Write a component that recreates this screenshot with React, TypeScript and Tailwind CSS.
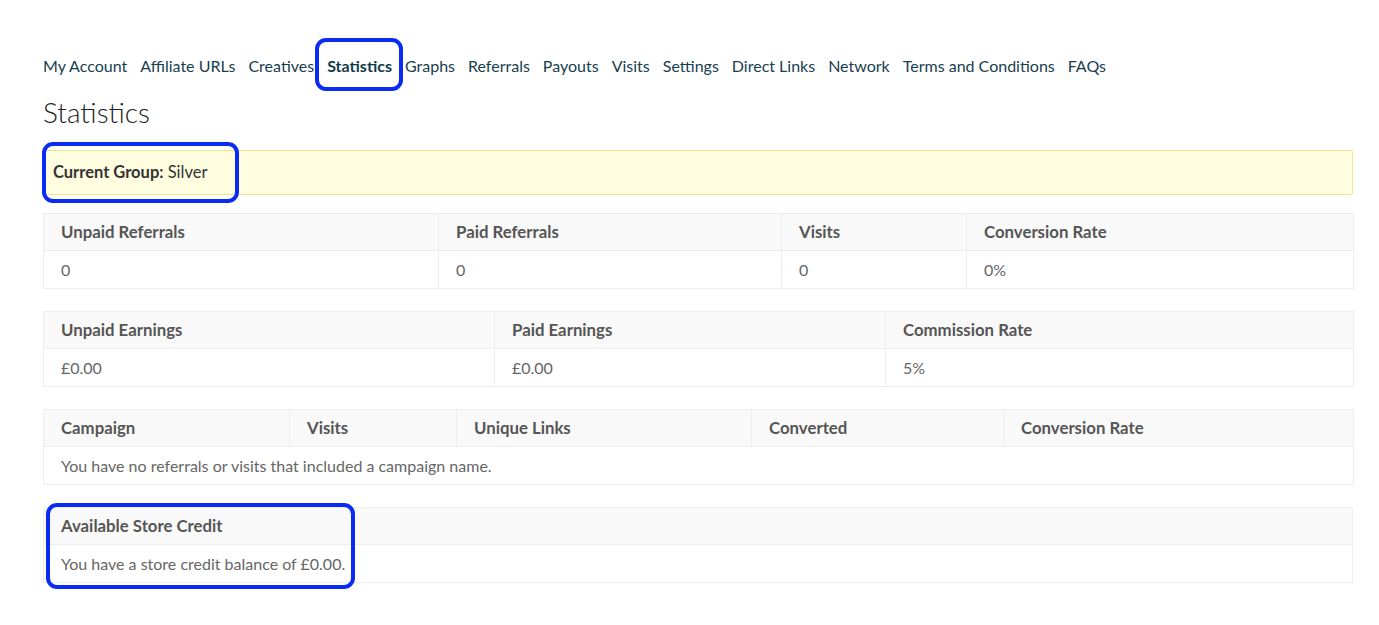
const navItems = [
  "My Account",
  "Affiliate URLs",
  "Creatives",
  "Statistics",
  "Graphs",
  "Referrals",
  "Payouts",
  "Visits",
  "Settings",
  "Direct Links",
  "Network",
  "Terms and Conditions",
  "FAQs",
];

const Highlight = ({ className }: { className: string }) => (
  <span
    className={`pointer-events-none absolute border-[4px] border-[#0a2bf2] rounded-[11px] ${className}`}
  />
);

type Col = { label: string; value?: string; width: string };

const thClass =
  "h-[37px] border border-[#eeeeee] px-[17px] text-left text-[16.8px] font-bold text-[#555555]";
const tdClass = "h-[38px] border border-[#eeeeee] px-[17px] text-[#666666]";

const StatTable = ({ cols }: { cols: Col[] }) => (
  <table className="w-full border-collapse table-fixed">
    <thead>
      <tr className="bg-[#f9f9f9]">
        {cols.map((c) => (
          <th key={c.label} style={{ width: c.width }} className={thClass}>
            {c.label}
          </th>
        ))}
      </tr>
    </thead>
    <tbody>
      <tr>
        {cols.map((c) => (
          <td key={c.label} className={tdClass}>
            {c.value}
          </td>
        ))}
      </tr>
    </tbody>
  </table>
);

export default function App() {
  return (
    <div
      className="min-h-screen bg-white text-[16px]"
      style={{ fontFamily: "Lato, 'Open Sans', sans-serif" }}
    >
      <div className="pl-[43px] pr-[26px] pt-[54px]">
        <nav className="flex gap-[13px] text-[#17404f] leading-[24px]">
          {navItems.map((item) =>
            item === "Statistics" ? (
              <span key={item} className="relative font-bold text-[#113a48]">
                {item}
                <Highlight className="-left-[12px] -right-[11px] -top-[16px] -bottom-[13px]" />
              </span>
            ) : (
              <a key={item} href="#">
                {item}
              </a>
            )
          )}
        </nav>

        <h1 className="mt-[12px] text-[28px] font-light leading-[44px] text-[#222222]">
          Statistics
        </h1>

        <div className="relative mt-[16px] h-[45px] flex items-center rounded-[2px] border border-[#eee593] bg-[#fffddf] px-[9px] text-[16.5px] text-[#333333]">
          <span>
            <strong>Current Group:</strong> Silver
          </span>
          <Highlight className="-left-[2px] w-[197px] -top-[9px] -bottom-[9px]" />
        </div>

        <div className="mt-[18px] flex flex-col gap-[22px]">
          <StatTable
            cols={[
              { label: "Unpaid Referrals", value: "0", width: "395px" },
              { label: "Paid Referrals", value: "0", width: "343px" },
              { label: "Visits", value: "0", width: "185px" },
              { label: "Conversion Rate", value: "0%", width: "387px" },
            ]}
          />
          <StatTable
            cols={[
              { label: "Unpaid Earnings", value: "£0.00", width: "451px" },
              { label: "Paid Earnings", value: "£0.00", width: "391px" },
              { label: "Commission Rate", value: "5%", width: "468px" },
            ]}
          />

          <table className="w-full border-collapse table-fixed">
            <thead>
              <tr className="bg-[#f9f9f9]">
                {[
                  ["Campaign", "246px"],
                  ["Visits", "167px"],
                  ["Unique Links", "295px"],
                  ["Converted", "252px"],
                  ["Conversion Rate", "350px"],
                ].map(([label, w]) => (
                  <th key={label} style={{ width: w }} className={thClass}>
                    {label}
                  </th>
                ))}
              </tr>
            </thead>
            <tbody>
              <tr>
                <td colSpan={5} className={tdClass}>
                  You have no referrals or visits that included a campaign name.
                </td>
              </tr>
            </tbody>
          </table>

          <div className="relative">
            <table className="w-full border-collapse">
              <thead>
                <tr className="bg-[#f9f9f9]">
                  <th className={thClass}>Available Store Credit</th>
                </tr>
              </thead>
              <tbody>
                <tr>
                  <td className={tdClass}>
                    You have a store credit balance of £0.00.
                  </td>
                </tr>
              </tbody>
            </table>
            <Highlight className="left-[3px] w-[309px] -top-[4px] -bottom-[6px]" />
          </div>
        </div>
      </div>
    </div>
  );
}
